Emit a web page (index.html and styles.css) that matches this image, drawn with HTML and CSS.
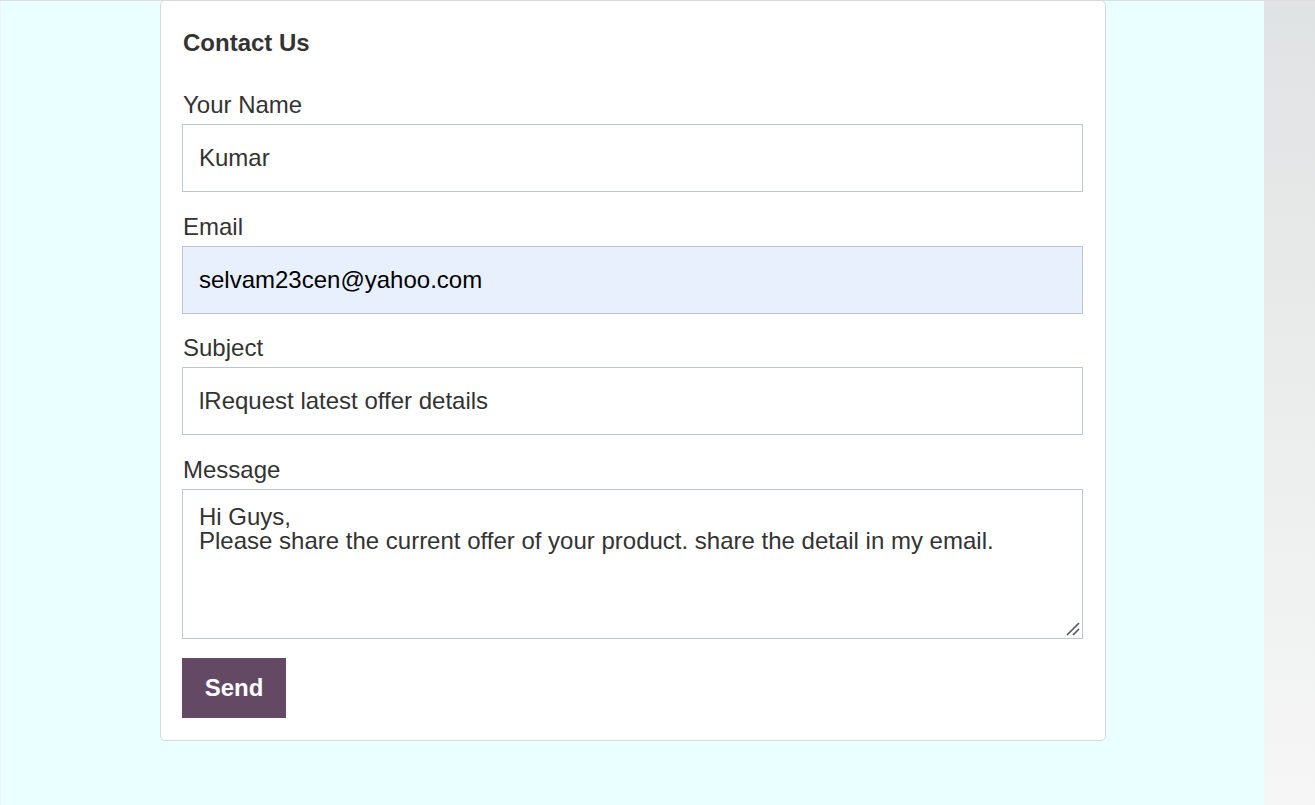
FILE: index.html
```html
<!DOCTYPE html>
<html>
<head>
<meta charset="utf-8">
<link rel="stylesheet" href="styles.css">
</head>
<body>
<div class="page">
  <main class="stage">
    <form class="card">
      <h2 class="title">Contact Us</h2>
      <div class="field">
        <label class="label">Your Name</label>
        <div class="input">Kumar</div>
      </div>
      <div class="field">
        <label class="label">Email</label>
        <div class="input autofill">selvam23cen@yahoo.com</div>
      </div>
      <div class="field">
        <label class="label">Subject</label>
        <div class="input">lRequest latest offer details</div>
      </div>
      <div class="field last">
        <label class="label">Message</label>
        <div class="textarea">
          <div class="line">Hi Guys,</div>
          <div class="line">Please share the current offer of your product. share the detail in my email.</div>
          <svg class="grip" width="14" height="14" viewBox="0 0 14 14"><path d="M13 1 L1 13 M13 7 L7 13" stroke="#555" stroke-width="1.6"/></svg>
        </div>
      </div>
      <div class="actions"><button type="button" class="send">Send</button></div>
    </form>
  </main>
  <aside class="side"></aside>
</div>
</body>
</html>
```
FILE: styles.css
```css
* { box-sizing: border-box; }
html, body { margin: 0; padding: 0; }
body {
  font-family: "Liberation Sans", Arial, sans-serif;
  color: #333;
  width: 1315px;
  height: 805px;
  overflow: hidden;
}
.page {
  display: flex;
  height: 805px;
  border-top: 1px solid #dcdedd;
}
.stage {
  width: 1264px;
  background: #eaffff;
  border-left: 1px solid #eef3f3;
  padding-left: 159px;
}
.side {
  flex: 1;
  background: linear-gradient(#e0e3e3, #f6f6f6);
}
.card {
  width: 946px;
  height: 741px;
  margin-top: -1px;
  background: #fff;
  border: 1px solid #d6dadc;
  border-radius: 5px;
  padding: 30px 22px 21px 21px;
}
.title {
  margin: 0 0 39px 1px;
  font-size: 24px;
  line-height: 23px;
  font-weight: bold;
  color: #333;
}
.field { margin-bottom: 22.5px; }
.field.last { margin-bottom: 19px; }
.label {
  display: block;
  font-size: 24px;
  line-height: 23px;
  margin: 0 0 8px 1px;
  color: #333;
}
.input {
  height: 68px;
  border: 1px solid #bcc6d6;
  padding: 0 16px;
  display: flex;
  align-items: center;
  font-size: 24px;
  color: #333;
  background: #fff;
}
.input.autofill { background: #e8f0fe; color: #000; }
.textarea {
  position: relative;
  height: 150px;
  border: 1px solid #bcc6d6;
  padding: 16px 16px;
  font-size: 24px;
  color: #333;
}
.line { height: 24px; line-height: 22px; }
.grip { position: absolute; right: 2px; bottom: 2px; }
.send {
  width: 104px;
  height: 60px;
  border: none;
  background: #634963;
  color: #fff;
  font-family: "Liberation Sans", Arial, sans-serif;
  font-size: 24px;
  font-weight: bold;
  padding: 0;
  display: block;
}
```
